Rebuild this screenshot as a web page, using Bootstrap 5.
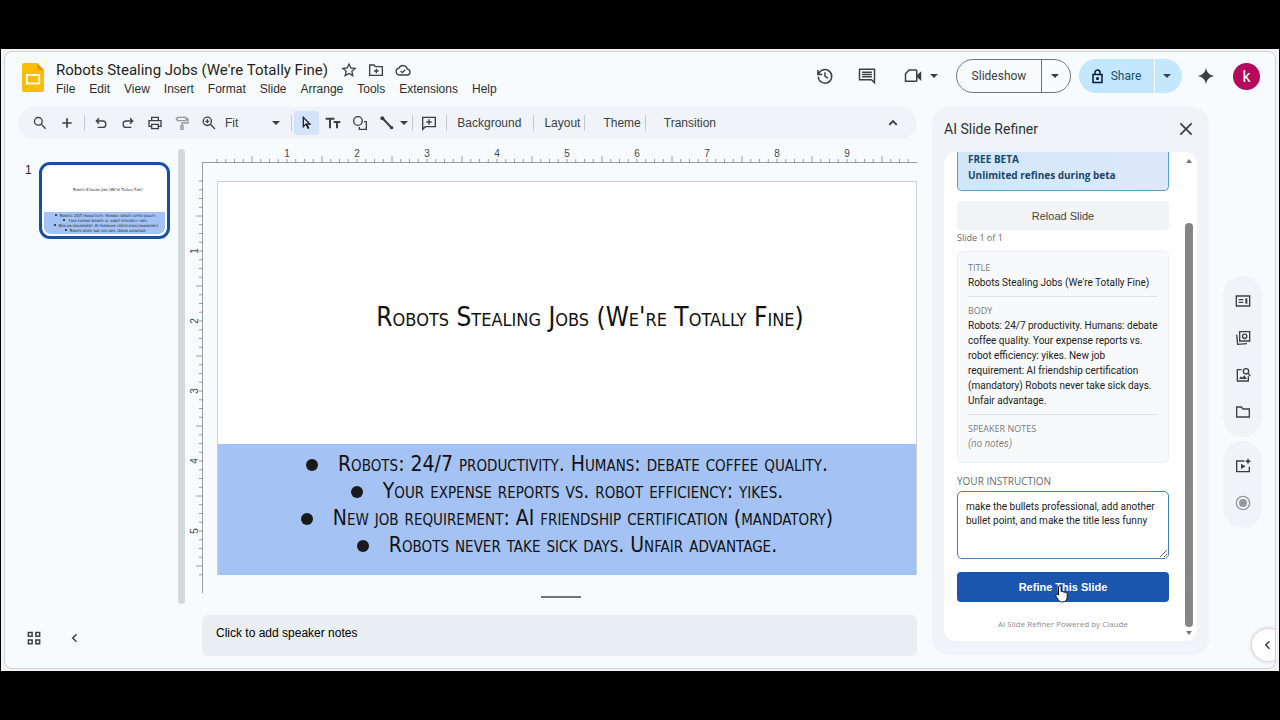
<!DOCTYPE html>
<html lang="en">
<head>
<meta charset="utf-8">
<meta name="viewport" content="width=device-width, initial-scale=1">
<title>Robots Stealing Jobs (We're Totally Fine)</title>
<link href="https://cdn.jsdelivr.net/npm/bootstrap@5.3.0/dist/css/bootstrap.min.css" rel="stylesheet">
<style>
body{background:#000;font-family:"Liberation Sans",Roboto,sans-serif;color:#1f1f1f;font-size:12px;line-height:16px}
.backdrop{background:#f3f3f5;margin:49px 1px;padding:2px 3px}
.appwin{background:#f8fbfe;border:1px solid #cfd1d4;border-radius:8px;overflow:hidden}
button{border:0;background:none;padding:0;color:inherit}
.ic{display:block;width:18px;height:18px;fill:none;stroke:#3c4043;stroke-width:2;flex:none}
.ic .f,.ic.f{fill:#3c4043;stroke:none}
.caret{width:0;height:0;border:4px solid transparent;border-top-color:#3c4043;border-bottom:0;display:block}
.topbar{height:55px;padding:7px 15px 0 17px}
.doctitle{font-family:Roboto,sans-serif;font-size:15px;line-height:22px;font-weight:400;color:#1f1f1f;margin:0;padding-right:13px}
.titleicons{gap:11px}
.titleicons .ic{width:16px;height:16px}
.menus{gap:14px}
.menus a{color:#2b2d30;text-decoration:none}
.callbtn{margin:0 14px 0 4px}
.pill{height:34px;border-radius:17px;font-family:Roboto,sans-serif;font-weight:500;font-size:12px;overflow:hidden;flex:none}
.pill button{height:100%;display:flex;align-items:center;justify-content:center}
.pill .main-b{width:84px}
.pill .drop-b{width:29px;padding-right:3px}
.pill.show-p{border:1px solid #747775;color:#3c4043}
.pill.share-p{background:#c2e7ff;color:#1c5070;margin-right:15px}
.pill.share-p .main-b{width:75px;gap:8px}
.pill.share-p .drop-b{width:28px}
.spark{margin-right:18px}
.avatar{width:27px;height:27px;border-radius:50%;background:#b5095d;color:#fff;font:16px/27px Roboto,sans-serif}
.tools{height:32px;border-radius:16px;background:#f0f4f9;padding:0 15px 0 8px;margin-left:13px;color:#3c4043}
.tools .tb{width:27px;height:24px;display:flex;align-items:center;justify-content:center;border-radius:3px}
.tools .tb .ic{width:16px;height:16px}
.tools .on{background:#d3e3fd;width:25px}
.tools .sep{width:1px;height:16px;background:#c7cacd;flex:none;margin:0 2px 0 4px}
.fit{padding:0 7px 0 3px;gap:34px}
.film{width:173px;padding-left:20px}
.filmhead{padding-top:23px;gap:7px}
.filmthumb{width:131px;height:77px;border:3px solid #174ea6;border-radius:11px;padding:2px;background:#fff}
.filmslide{height:100%;border-radius:7px;overflow:hidden;background:#fff}
.filmbar{width:7px;border-radius:4px;background:#d5d8da;margin:10px 0 11px}
.canvas{padding-left:3px}
.slidefont{font-family:"Liberation Sans Narrow","DejaVu Sans Condensed",sans-serif;font-variant:small-caps;color:#111}
.board{display:grid;grid-template-columns:15px 14px minmax(0,1fr);grid-template-rows:16px 18px auto;padding-top:8px}
.board .top-r{grid-area:1/3}
.board .left-r{grid-area:3/1}
.slide{grid-area:3/3;aspect-ratio:16/9;border:1px solid #cdd0d2;background:#fff;border-bottom:0}
.slide h2{font-size:26px;line-height:32px;padding:119px 0 0 46px;text-align:center;margin:0;font-weight:400}
.bluebox{height:33.3%;background:#a4c2f4;padding:7px 0 0 32px;font-size:21px;line-height:27px;text-align:center;color:#111}
.bluebox li::before{content:"";display:inline-block;width:12px;height:12px;border-radius:50%;background:#1a1a1a;margin:0 20px 0 -32px}
.mini h3{font-size:4px;line-height:8px;text-align:center;margin:0;padding:19px 0 0 7px;font-weight:400}
.mini ul{background:#a4c2f4;font-size:4px;line-height:5px;height:25px;margin:18px 0 0;text-align:center;padding:1px 0 0 8px}
.mini li::before{content:"";display:inline-block;width:2px;height:2px;border-radius:50%;background:#1a1a1a;margin:0 3px 1px -5px}
.grip{width:40px;height:2px;background:#747775;margin:21px auto 17px}
.viewbtns{width:197px;padding:4px 0 0 20px;gap:23px}
.notes{height:41px;background:#e9eef3;border:0;border-radius:6px;resize:none;padding:10px 14px;font-size:12px;line-height:16px;display:block;width:100%}
.notes::placeholder{color:#000;opacity:1}
.dock{width:277px;background:#f0f4f8;border-radius:16px;padding:0 12px 14px;margin:0 0 13px 15px}
.dockhead{height:45px;padding:0 2px 2px 0}
.dock h2{font-family:Roboto,sans-serif;font-size:14px;line-height:20px;font-weight:400;margin:0;color:#303236}
.dockbody{background:#fff;font-family:"Open Sans","Noto Sans",sans-serif;height:489px;border-radius:12px;overflow:hidden}
.dockmain{padding:0 16px 0 13px}
.beta{border:1px solid #4ea3cc;border-top:0;border-radius:0 0 5px 5px;background:linear-gradient(90deg,#cfe6fb,#dfe8fa);color:#17496b;font-size:10px;line-height:16px;padding:0 10px 7px;font-weight:700;margin-top:-1px}
.reload{background:#f1f3f4;border-radius:4px;height:29px;font:11px/16px "Liberation Sans",sans-serif;color:#444;margin-top:10px}
.cardish{background:#f8f9fa;border:1px solid #eceef0;border-radius:5px;padding:8px 10px 11px;line-height:15px;color:#202124}
.copy{font-family:Roboto,"Noto Sans",sans-serif;font-size:10px;line-height:15px}
.bodytext{margin-right:-4px}
.cap{color:#777b80;font-size:9px;line-height:15px}
.cap-l{color:#666a6f;font-size:10px;line-height:15px;padding:11px 0 2px}
.cardish section+section{border-top:1px solid #dfe1e4;margin-top:6px;padding-top:6px}
.instr{border:1px solid #3f80bd;border-radius:5px;width:100%;height:68px;padding:8px 4px 8px 8px;line-height:14px;color:#202124;display:block}
.gowrap{padding-top:13px}
.go{background:#1a56ae;border-radius:4px;height:30px;color:#fff;font:bold 11px/16px "Liberation Sans",sans-serif}
.slideno{font-size:9px;line-height:12px;color:#666a6f;padding:2px 0 7px}
.foot{font-size:8px;line-height:12px;color:#8a8d91}
.sbar{width:12px;padding:6px 0 5px;flex:none}
.sbar i{display:block;width:8px;border-radius:4px;background:#858585;margin-top:60px}
.railwrap{padding:169px 13px 0 14px}
.rail{width:39px;background:#f0f4f8;border-radius:20px;gap:21px;padding:17px 0}
.rail .ic{width:16px;height:16px}
.corner{right:-9px;bottom:7px;width:32px;height:32px;border-radius:50%;background:#fff;box-shadow:0 0 4px rgba(0,0,0,.3);padding-left:7px}
.hand{left:50%;top:18px;margin-left:-8px}
</style>
</head>
<body>
<div class="backdrop">
<div class="appwin position-relative">
  <header class="topbar d-flex align-items-start">
    <svg width="22" height="29" viewBox="0 0 22 29" class="flex-shrink-0 mt-1 me-2"><path d="M2 0h13l7 7v20a2 2 0 0 1-2 2H2a2 2 0 0 1-2-2V2a2 2 0 0 1 2-2z" fill="#fbbc04"/><path d="M15 0l7 7h-7z" fill="#e69b00"/><rect x="4.8" y="12" width="12.5" height="8.500" fill="none" stroke="#fff" stroke-width="1.8"/></svg>
    <div class="flex-grow-1 ps-1">
      <div class="d-flex align-items-center">
        <h1 class="doctitle">Robots Stealing Jobs (We're Totally Fine)</h1>
        <div class="d-flex titleicons">
        <button aria-label="Star"><svg class="ic" viewBox="0 0 24 24"><path d="M12 3l2.700 6 6.500.7-4.900 4.300 1.400 6.400L12 17.100l-5.700 3.300L7.700 14 2.800 9.700 9.300 9z"/></svg></button>
        <button aria-label="Move"><svg class="ic" viewBox="0 0 24 24"><path d="M2.500 4.500h6.500l2 2.500h10.500v13h-19zM12.500 17v-7M9 13.500h7"/></svg></button>
        <button aria-label="Saved to cloud"><svg class="ic" viewBox="0 0 24 24"><path d="M6.500 19.500a5.200 5.200 0 0 1-.6-10.300 6.700 6.700 0 0 1 12.700 1.600 4.400 4.400 0 0 1 .3 8.700zM8.500 13.500l2.500 2.500 4.500-4.500"/></svg></button>
        </div>
      </div>
      <nav class="menus d-flex"><a href="#">File</a><a href="#">Edit</a><a href="#">View</a><a href="#">Insert</a><a href="#">Format</a><a href="#">Slide</a><a href="#">Arrange</a><a href="#">Tools</a><a href="#">Extensions</a><a href="#">Help</a></nav>
    </div>
    <div class="d-flex align-items-center">
      <button aria-label="Version history" class="me-4"><svg class="ic" viewBox="0 0 24 24"><path d="M3.500 9.500A9 9 0 1 1 3 13M2.500 4v6h6M12 7v5.500l4 2.400"/></svg></button>
      <button aria-label="Comments" class="me-4"><svg class="ic" viewBox="0 0 24 24"><path d="M2 3h20v18l-4-4H2z"/><path d="M5.500 7h13M5.500 10h13M5.500 13h13"/></svg></button>
      <button aria-label="Call" class="callbtn d-flex align-items-center gap-2"><svg class="ic" viewBox="0 0 24 24"><path d="M7 4h9q1 0 1 1v13q0 1-1 1H2V9z"/><path class="f" d="M17 11l6-5.500v13L17 13z"/></svg><span class="caret"></span></button>
      <div class="pill show-p d-flex me-2 ms-1"><button class="main-b">Slideshow</button><button aria-label="Slideshow options" class="drop-b border-start border-secondary"><span class="caret"></span></button></div>
      <div class="pill share-p d-flex"><button class="main-b"><svg width="11" height="15" viewBox="0 0 11 15" fill="none" stroke="#001d35" stroke-width="1.500"><rect x="1" y="5.500" width="9" height="8"/><path d="M3 5.500V3.500a2.500 2.500 0 0 1 5 0v2"/><circle cx="5.500" cy="9.500" r=".8"/></svg>Share</button><button aria-label="Share options" class="drop-b border-start border-white"><span class="caret"></span></button></div>
      <button aria-label="Gemini" class="spark"><svg class="ic f" viewBox="0 0 24 24"><path d="M12 1c1.200 6.500 4.500 9.800 11 11-6.500 1.200-9.800 4.500-11 11-1.200-6.500-4.500-9.800-11-11 6.500-1.200 9.800-4.500 11-11z"/></svg></button>
      <button class="avatar" aria-label="Account">k</button>
    </div>
  </header>

  <div class="d-flex">
    <main class="flex-grow-1">
      <div class="tools d-flex align-items-center">
        <button class="tb" aria-label="Search menus"><svg class="ic" viewBox="0 0 24 24"><circle cx="9.500" cy="9.500" r="5.800"/><path d="M14 14l6.500 6.500"/></svg></button>
        <button class="tb" aria-label="New slide"><svg class="ic" viewBox="0 0 24 24"><path stroke-width="2.500" d="M12 5v14M5 12h14"/></svg></button>
        <span class="sep"></span>
        <button class="tb" aria-label="Undo"><svg class="ic" viewBox="0 0 24 24"><path d="M9 5L5 9l4 4M5 9h9.500a4.800 4.800 0 0 1 0 9.600H7"/></svg></button>
        <button class="tb" aria-label="Redo"><svg class="ic" viewBox="0 0 24 24"><path d="M15 5l4 4-4 4M19 9H9.500a4.800 4.800 0 0 0 0 9.600H17"/></svg></button>
        <button class="tb" aria-label="Print"><svg class="ic" viewBox="0 0 24 24"><path d="M7 8V3.500h10V8M6.500 17H3V8.500h18V17h-3.500M7 14h10v6.500H7z"/></svg></button>
        <button class="tb" aria-label="Paint format"><svg class="ic opacity-50" viewBox="0 0 24 24"><path d="M5 3.500h13v5H5zM18 6h3v6h-9v4M10.500 16h3v5.500h-3zM5 6H2.500"/></svg></button>
        <button class="tb" aria-label="Zoom"><svg class="ic" viewBox="0 0 24 24"><circle cx="9.500" cy="9.500" r="6.200"/><path d="M14 14l7 7M9.500 6.500v6M6.500 9.500h6"/></svg></button>
        <button class="fit d-flex align-items-center">Fit<span class="caret"></span></button>
        <span class="sep"></span>
        <button class="tb on" aria-label="Select"><svg class="ic" viewBox="0 0 24 24"><path stroke="#1f1f1f" d="M6.500 3.500v14l3.800-3.800h6z"/><path stroke="#1f1f1f" stroke-width="3" d="M11 13.500l3.500 7"/></svg></button>
        <button class="tb" aria-label="Text box"><svg class="ic f" viewBox="0 0 24 24"><path d="M1 4h13v3H9v13H6V7H1zM13 9h10v3h-3.500v8h-3v-8H13z"/></svg></button>
        <button class="tb" aria-label="Shape"><svg class="ic" viewBox="0 0 24 24"><circle cx="9" cy="9" r="6.500"/><path d="M18 10h3.500v11.500H11V18"/></svg></button>
        <button class="tb" aria-label="Line"><svg class="ic" viewBox="0 0 24 24"><path stroke-width="3" d="M5 4.500l14 15"/><circle class="f" cx="5" cy="5" r="3"/><circle class="f" cx="19" cy="19" r="2.500"/></svg></button>
        <button aria-label="Line options"><span class="caret"></span></button>
        <span class="sep"></span>
        <button class="tb" aria-label="Add comment"><svg class="ic" viewBox="0 0 24 24"><path d="M2.500 3.500h19v14H6.500l-4 4zM12 6.500v8M8 10.500h8"/></svg></button>
        <span class="sep"></span>
        <button class="px-2">Background</button><span class="sep"></span>
        <button class="ps-2">Layout</button><span class="sep"></span>
        <button class="ps-3">Theme</button><span class="sep"></span>
        <button class="ps-3">Transition</button>
        <button aria-label="Hide menus" class="ms-auto"><svg class="ic" viewBox="0 0 24 24"><path stroke-width="2.500" d="M7 14.500l5-5 5 5"/></svg></button>
      </div>

      <div class="d-flex">
        <div class="film flex-shrink-0">
          <div class="filmhead d-flex">
            <div>1</div>
            <div class="filmthumb flex-shrink-0"><div class="filmslide mini slidefont">
              <h3>Robots Stealing Jobs (We're Totally Fine)</h3>
              <ul class="list-unstyled"><li>Robots: 24/7 productivity. Humans: debate coffee quality.</li><li>Your expense reports vs. robot efficiency: yikes.</li><li>New job requirement: AI friendship certification (mandatory)</li><li>Robots never take sick days. Unfair advantage.</li></ul>
            </div></div>
          </div>
        </div>
        <div class="filmbar flex-shrink-0"></div>
        <div class="canvas flex-grow-1">
          <div class="board">
            <svg id="hr" class="top-r w-100 overflow-visible d-block" viewBox="0 0 700 16"></svg>
            <svg id="vr" class="left-r w-100 overflow-visible d-block" viewBox="0 0 15 394"></svg>
            <div class="slide d-flex flex-column slidefont">
              <h2 class="flex-grow-1">Robots Stealing Jobs (We're Totally Fine)</h2>
              <ul class="bluebox list-unstyled mb-0"><li>Robots: 24/7 productivity. Humans: debate coffee quality.</li><li>Your expense reports vs. robot efficiency: yikes.</li><li>New job requirement: AI friendship certification (mandatory)</li><li>Robots never take sick days. Unfair advantage.</li></ul>
            </div>
          </div>
          <div class="ps-3"><div class="grip"></div></div>
        </div>
      </div>
      <div class="d-flex">
        <div class="viewbtns d-flex align-items-center flex-shrink-0">
          <button aria-label="Grid view"><svg class="ic" viewBox="0 0 24 24"><path d="M4.500 4.500h5v5h-5zM14.500 4.500h5v5h-5zM4.500 14.500h5v5h-5zM14.500 14.500h5v5h-5z"/></svg></button>
          <button aria-label="Collapse filmstrip"><svg class="ic" viewBox="0 0 24 24"><path d="M14 7l-5 5 5 5"/></svg></button>
        </div>
        <textarea class="notes" aria-label="Speaker notes" placeholder="Click to add speaker notes"></textarea>
      </div>
    </main>

    <aside class="dock flex-shrink-0">
      <div class="dockhead d-flex align-items-center justify-content-between"><h2>AI Slide Refiner</h2><button aria-label="Close"><svg class="ic" viewBox="0 0 24 24"><path stroke-width="2.300" d="M4.500 4.500l15 15M19.500 4.500l-15 15"/></svg></button></div>
      <div class="dockbody d-flex">
        <div class="dockmain flex-grow-1">
          <div class="beta">FREE BETA<br>Unlimited refines during beta</div>
          <button class="reload w-100">Reload Slide</button>
          <div class="slideno">Slide 1 of 1</div>
          <div class="cardish">
            <section><div class="cap">TITLE</div><div class="copy">Robots Stealing Jobs (We're Totally Fine)</div></section>
            <section><div class="cap">BODY</div><div class="copy bodytext">Robots: 24/7 productivity. Humans: debate coffee quality. Your expense reports vs. robot efficiency: yikes. New job requirement: AI friendship certification (mandatory) Robots never take sick days. Unfair advantage.</div></section>
            <section><div class="cap">SPEAKER NOTES</div><div class="copy fst-italic text-black-50">(no notes)</div></section>
          </div>
          <label class="d-block cap-l" for="instr">YOUR INSTRUCTION</label>
          <textarea id="instr" class="copy instr">make the bullets professional, add another bullet point, and make the title less funny</textarea>
          <div class="position-relative gowrap"><button class="go w-100">Refine This Slide</button>
          <svg class="position-absolute hand mt-2" width="13" height="18" viewBox="0 0 13 18"><path d="M3.500 10V2a1.300 1.300 0 0 1 2.600 0v4.500c1-.6 2 0 2.200.6.900-.5 1.700 0 1.900.6 1-.4 2 .2 2 1.300v3c0 2.500-1.500 5-4.700 5-3 0-4-1.500-6.500-5.800-.7-1.300 1-2.200 2.500-1.200z" fill="#fff" stroke="#111"/></svg></div>
          <div class="foot text-center pt-3">AI Slide Refiner Powered by Claude</div>
        </div>
        <div class="sbar d-flex flex-column" aria-hidden="true">
          <svg width="8" height="5" viewBox="0 0 8 5"><path d="M1 5l3-4 3 4z" fill="#777"/></svg><i class="flex-grow-1 mb-1"></i><svg width="8" height="5" viewBox="0 0 8 5"><path d="M1 0l3 4 3-4z" fill="#777"/></svg>
        </div>
      </div>
    </aside>

    <div class="railwrap flex-shrink-0">
      <div class="rail d-flex flex-column align-items-center">
        <button aria-label="Templates"><svg class="ic" viewBox="0 0 24 24"><path d="M2 4.500h20v15H2zM5.500 10h7M5.500 14h7"/><path stroke-width="3" d="M17 8v8"/></svg></button>
        <button aria-label="Building blocks"><svg class="ic" viewBox="0 0 24 24"><path d="M7 2.500h15v14H7zM2.500 7l1.500 14.500 14-1"/><circle cx="14.500" cy="9.500" r="3.200"/></svg></button>
        <button aria-label="Images"><svg class="ic" viewBox="0 0 24 24"><path d="M10 4H3.500v17H20v-7"/><circle cx="16.500" cy="6.500" r="4"/><path d="M19 9.500l4 4"/><path class="f" d="M6 18l3-4 2 2 3-3.500 4 5.500z"/></svg></button>
        <button aria-label="Drive"><svg class="ic" viewBox="0 0 24 24"><path d="M2.500 4.500h7l2.500 3h9.500v12h-19z"/></svg></button>
      </div>
      <div class="rail d-flex flex-column align-items-center mt-1">
        <button aria-label="Create video"><svg class="ic overflow-visible" viewBox="0 0 24 24"><path d="M14 4.500H2.500v16h19V13"/><path class="f" d="M9 8.500l7 4-7 4z"/><path class="f" d="M19.500 0l1.500 3.500L24.500 5 21 6.500 19.500 10 18 6.500 14.500 5 18 3.500z"/></svg></button>
        <button aria-label="Record" class="opacity-50"><svg class="ic" viewBox="0 0 24 24"><circle cx="12" cy="12" r="10"/><circle class="f" cx="12" cy="12" r="6"/></svg></button>
      </div>
    </div>
  </div>
  <button class="corner position-absolute" aria-label="Show side panel"><svg class="ic" viewBox="0 0 24 24"><path d="M14 7l-5 5 5 5"/></svg></button>
</div>
</div>
<script src="https://cdn.jsdelivr.net/npm/bootstrap@5.3.0/dist/js/bootstrap.bundle.min.js"></script>
<script>
// Rulers: 70 units per inch, eight ticks per inch
const label = (x, y, n, t = '') => `<text x="${x}" y="${y}" font-size="10" text-anchor="middle" fill="#444746" ${t}>${n}</text>`;
let h = '', v = '', ht = '', vt = '';
for (let i = 0; i < 80; i++) {
  const p = i * 8.75, len = i % 8 === 4 ? 7 : 4;
  h += `M${p} 16v${-len}`;
  if (i && i % 8 === 0) ht += label(p, 10, i / 8);
  if (i <= 45) {
    v += `M15 ${p}h${-len}`;
    if (i && i % 8 === 0) vt += label(0, 0, i / 8, `transform="translate(10 ${p}) rotate(-90)"`);
  }
}
hr.innerHTML = `<path d="M-15 15.500H700${h}" stroke="#80868b" stroke-width=".8" fill="none"/>` + ht;
vr.innerHTML = `<path d="M14.500 -18V412${v}" stroke="#80868b" stroke-width=".8" fill="none"/>` + vt;
</script>
</body>
</html>
